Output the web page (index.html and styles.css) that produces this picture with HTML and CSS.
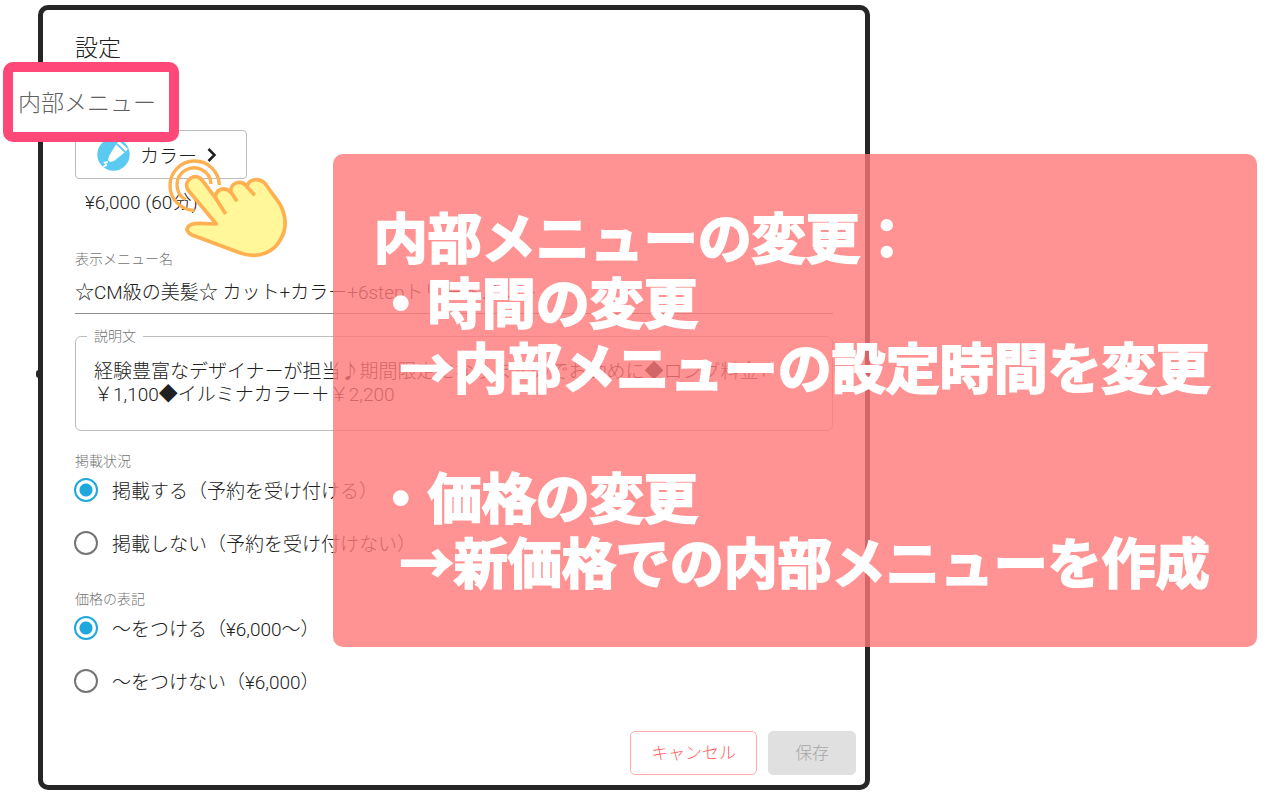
FILE: index.html
```
<!DOCTYPE html>
<html lang="ja">
<head>
<meta charset="UTF-8">
<meta name="viewport" content="width=device-width, initial-scale=1.0">
<title>設定</title>
    <link rel="stylesheet" href="styles.css">
</head>
<body>
    <main class="page">
        <form class="dialog">
            <h1 class="title">設定</h1>

            <!-- internal menu -->
            <button type="button" class="menu-button">
                <svg class="menu-icon" viewBox="0 0 33 33" aria-hidden="true">
                    <circle cx="16.5" cy="16.5" r="16.2" fill="#5bcaf3"/>
                    <path d="M22 3 L31 11 L28.500 13.500 L20 5.500 Z" fill="#fff"/>
                    <path d="M19 6.500 L27.500 14.500 L17 23 L13 24 L11 22 L12 18 Z" fill="#fff"/>
                    <path d="M21 6.500 L28 13" fill="none" stroke="#5bcaf3" stroke-width="1"/>
                    <path d="M11 24 L7.500 24.500 L9.500 27 L6 29" fill="none" stroke="#fff" stroke-width="1.500"/>
                </svg>
                <span>カラー</span>
                <svg class="menu-arrow" viewBox="0 0 10 16" aria-hidden="true">
                    <path d="M1.500 2 L7.500 8 L1.500 14" fill="none" stroke="#212121" stroke-width="2.500"/>
                </svg>
            </button>
            <p class="price">¥6,000 (60分)</p>

            <!-- menu name -->
            <div class="field">
                <label class="label" for="menu-name">表示メニュー名</label>
                <input class="text-input" id="menu-name" type="text" value="☆CM級の美髪☆ カット+カラー+6stepトリートメント">
            </div>

            <!-- description -->
            <fieldset class="outlined">
                <legend><label for="description">説明文</label></legend>
                <textarea id="description" rows="2">経験豊富なデザイナーが担当♪期間限定になりますのでお勧めに◆ロング料金+
￥1,100◆イルミナカラー＋￥2,200</textarea>
            </fieldset>

            <!-- publish state -->
            <fieldset class="radio-group">
                <legend class="label">掲載状況</legend>
                <label class="radio"><input type="radio" name="publish" checked>掲載する（予約を受け付ける）</label>
                <label class="radio"><input type="radio" name="publish">掲載しない（予約を受け付けない）</label>
            </fieldset>

            <!-- price notation -->
            <fieldset class="radio-group">
                <legend class="label">価格の表記</legend>
                <label class="radio"><input type="radio" name="notation" checked>～をつける（¥6,000～）</label>
                <label class="radio"><input type="radio" name="notation">～をつけない（¥6,000）</label>
            </fieldset>

            <div class="actions">
                <button type="button" class="button cancel">キャンセル</button>
                <button type="submit" class="button save" disabled>保存</button>
            </div>
        </form>

        <h2 class="callout">内部メニュー</h2>

        <svg class="pointer" viewBox="325 115 360 300" aria-hidden="true">
            <g fill="none" stroke="#ffb050" stroke-width="10">
                <path d="M405 272 A74 74 0 1 1 479 196"/>
                <path d="M378 240 A51 51 0 1 1 454 193"/>
            </g>
            <path class="hand" d="M470 313 L385 211 C368 181 408 156 428 182 L469 237 C463 213 491 196 514 218 C510 188 545 178 562 201 C568 174 600 176 615 190 L653 242 C679 277 683 322 666 353 C646 398 597 419 542 400 L397 346 C371 334 380 310 420 311 Z"/>
            <path class="crease" d="M469 237 L498 283 M514 218 L532 245 M562 201 L585 227"/>
        </svg>

        <div class="note">
            <p>内部メニューの変更：</p>
            <p>・時間の変更</p>
            <p class="indent">→内部メニューの設定時間を変更</p>
            <p><br></p>
            <p>・価格の変更</p>
            <p class="indent">→新価格での内部メニューを作成</p>
        </div>
    </main>
</body>
</html>
```
FILE: styles.css
```
*{
    box-sizing: border-box;
}
body{
    margin: 0;
    background-color: #ffffff;
    color: #212121;
    font-family: Roboto, "Noto Sans CJK JP Light", "Noto Sans CJK JP", sans-serif;
    font-size: 19px;
    font-weight: 300;
}
h1, h2, p{
    margin: 0;
    font-weight: inherit;
}
button, input, textarea{
    font-family: inherit;
    font-size: inherit;
    font-weight: inherit;
    color: inherit;
}
.page{
    position: relative;
    padding: 5px 0 10px 38px;
}
.dialog{
    position: relative;
    width: 67%;
    padding: 25px 32px 10px;
    border: 5px solid #262626;
    border-radius: 10px;
}
/* side handle */
.dialog::before{
    content: "";
    position: absolute;
    left: -7px;
    top: 360px;
    width: 6px;
    height: 8px;
    border-radius: 4px;
    background-color: #262626;
}
.title{
    font-size: 23px;
    line-height: 28px;
}
.menu-button{
    display: flex;
    align-items: center;
    gap: 10px;
    width: 172px;
    height: 49px;
    margin-top: 67px;
    padding: 0 21px;
    border: 1px solid #bdbdbd;
    border-radius: 4px;
    background-color: #ffffff;
}
.menu-icon{
    width: 33px;
    height: 33px;
}
.menu-arrow{
    width: 10px;
    height: 16px;
}
.price{
    margin: 12px 10px 0;
    line-height: 24px;
}
.label{
    display: block;
    padding: 0;
    font-size: 14px;
    line-height: 20px;
    color: #757575;
}
.field{
    margin-top: 34px;
}
.text-input{
    display: block;
    width: 100%;
    height: 45px;
    padding: 0 0 2px;
    border: 0;
    border-bottom: 1px solid #8c8c8c;
    background: none;
}
.outlined{
    margin: 12px 0 0;
    padding: 14px 18px 24px;
    border: 1px solid #bdbdbd;
    border-radius: 6px;
}
.outlined legend{
    margin-left: -7px;
    padding: 0 7px;
    font-size: 14px;
    line-height: 20px;
    color: #757575;
}
.outlined textarea{
    display: block;
    width: 100%;
    padding: 0;
    border: 0;
    background: none;
    line-height: 23px;
    resize: none;
    overflow: hidden;
}
.radio-group{
    margin: 20px 0 0;
    padding: 0;
    border: 0;
}
.radio{
    display: flex;
    align-items: center;
    gap: 14px;
    height: 53px;
    margin-top: -8px;
}
.radio + .radio{
    margin-top: 0;
}
.radio input{
    appearance: none;
    width: 24px;
    height: 24px;
    margin: 0 0 0 -1px;
    border: 2px solid #757575;
    border-radius: 50%;
}
.radio input:checked{
    border-color: #1fa8dc;
    background: radial-gradient(circle, #1fa8dc 6px, #ffffff 7px);
}
.actions{
    display: flex;
    justify-content: flex-end;
    gap: 11px;
    margin: 24px -23px 0 0;
}
.button{
    height: 44px;
    padding: 0 20px 3px;
    border: 1px solid #ffabab;
    border-radius: 5px;
    background-color: #ffffff;
    font-size: 17px;
    color: #ff6060;
}
.save{
    padding: 0 26px 3px;
    border-color: #e0e0e0;
    background-color: #e0e0e0;
    color: #a6a6a6;
}
.callout{
    position: absolute;
    left: 3px;
    top: 62px;
    padding: 17px 13px 13px 5px;
    border: 10px solid #ff4778;
    border-radius: 10px;
    background-color: #ffffff;
    font-size: 23px;
    line-height: 30px;
    color: #616161;
}
.pointer{
    position: absolute;
    left: 168px;
    top: 158px;
    width: 120px;
    height: 100px;
}
.hand{
    fill: #fff799;
    stroke: #ffb050;
    stroke-width: 11;
    stroke-linejoin: round;
}
.crease{
    fill: none;
    stroke: #ffb050;
    stroke-width: 11;
}
.note{
    position: absolute;
    left: 26%;
    right: 23px;
    top: 154px;
    padding: 49px 41px 54px;
    border-radius: 10px;
    background-color: rgba(255,119,119,0.8);
    color: #ffffff;
    font-family: "Noto Sans CJK JP", sans-serif;
    font-size: 54px;
    font-weight: 700;
    line-height: 65px;
    white-space: nowrap;
    -webkit-text-stroke: 2px #ffffff;
}
.indent{
    padding-left: 26px;
}
```
